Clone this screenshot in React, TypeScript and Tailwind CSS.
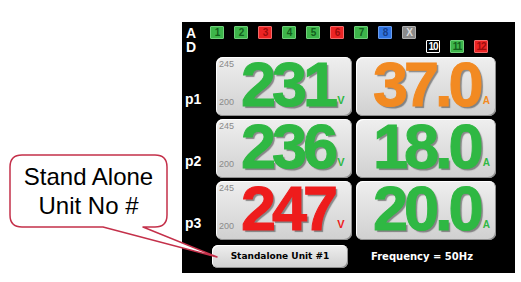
import React from 'react';

type Chan = { label: string; bg: string; fg: string; border: string };

const topChans: Chan[] = [
  { label: '1', bg: 'bg-[#3db54a]', fg: 'text-[#125e1c]', border: 'border-[#6fd07a]' },
  { label: '2', bg: 'bg-[#3db54a]', fg: 'text-[#125e1c]', border: 'border-[#6fd07a]' },
  { label: '3', bg: 'bg-[#ec2424]', fg: 'text-[#9c0c0c]', border: 'border-[#f26a6a]' },
  { label: '4', bg: 'bg-[#3db54a]', fg: 'text-[#125e1c]', border: 'border-[#6fd07a]' },
  { label: '5', bg: 'bg-[#3db54a]', fg: 'text-[#125e1c]', border: 'border-[#6fd07a]' },
  { label: '6', bg: 'bg-[#ec2424]', fg: 'text-[#9c0c0c]', border: 'border-[#f26a6a]' },
  { label: '7', bg: 'bg-[#3db54a]', fg: 'text-[#125e1c]', border: 'border-[#6fd07a]' },
  { label: '8', bg: 'bg-[#2f74e2]', fg: 'text-[#173f8c]', border: 'border-[#6c9ded]' },
  { label: 'X', bg: 'bg-[#8a8a8a]', fg: 'text-[#dcdcdc]', border: 'border-[#b0b0b0]' },
];

const bottomChans: Chan[] = [
  { label: '10', bg: 'bg-black', fg: 'text-white', border: 'border-white' },
  { label: '11', bg: 'bg-[#3db54a]', fg: 'text-[#125e1c]', border: 'border-[#6fd07a]' },
  { label: '12', bg: 'bg-[#ec2424]', fg: 'text-[#9c0c0c]', border: 'border-[#f26a6a]' },
];

const rows = [
  { phase: 'p1', volts: '231', vColor: 'text-[#2fb843]', amps: '37.0', aColor: 'text-[#f28a22]' },
  { phase: 'p2', volts: '236', vColor: 'text-[#2fb843]', amps: '18.0', aColor: 'text-[#2fb843]' },
  { phase: 'p3', volts: '247', vColor: 'text-[#ee1c1c]', amps: '20.0', aColor: 'text-[#2fb843]' },
];

const ChanBox = ({ c }: { c: Chan }) => (
  <div
    className={`w-[14px] h-[13px] flex items-center justify-center rounded-[1px] border text-[10px] font-bold leading-none tracking-[-1px] ${c.bg} ${c.fg} ${c.border}`}
  >
    {c.label}
  </div>
);

const cardCls =
  'h-[59px] rounded-[7px] bg-gradient-to-b from-[#efefef] to-[#d0d0d0] shadow-[inset_1px_1px_0_#ffffff,inset_-1px_-1px_0_#8f8f8f] flex';

const bigNum =
  "font-['Liberation_Sans',Arial,sans-serif] font-bold text-[63px] leading-[63px] tracking-[-4px] mt-[-4px] [-webkit-text-stroke:1px_currentColor] [text-shadow:2px_2px_1px_rgba(60,60,60,0.55)]";

export default function App() {
  return (
    <div className="relative w-[521px] h-[282px] bg-white overflow-hidden font-['Liberation_Sans',Arial,sans-serif]">
      <div className="pl-[182px] pt-[22px]">
        <div className="w-[333px] h-[251px] bg-black flex flex-col">
          {/* channel header */}
          <div className="pt-[4px] pl-[4px] flex flex-col gap-[1px]">
            <div className="flex items-center h-[13px]">
              <span className="w-[24px] text-white font-bold text-[14px] leading-[12px]">A</span>
              <div className="flex gap-[10px]">
                {topChans.map((c) => (
                  <ChanBox key={c.label} c={c} />
                ))}
              </div>
            </div>
            <div className="flex items-center h-[13px]">
              <span className="w-[24px] text-white font-bold text-[14px] leading-[12px]">D</span>
              <div className="flex gap-[10px] ml-[216px]">
                {bottomChans.map((c) => (
                  <ChanBox key={c.label} c={c} />
                ))}
              </div>
            </div>
          </div>

          {/* readings */}
          <div className="mt-[4px] grid grid-cols-[30px_136px_140px] gap-x-[4px] gap-y-[3px]">
            {rows.map((r) => (
              <React.Fragment key={r.phase}>
                <div className="flex items-end pl-[3px] pb-[10px] text-white font-bold text-[14px] leading-none">
                  {r.phase}
                </div>
                <div className={cardCls}>
                  <div className="w-[25px] pl-[3px] pt-[3px] pb-[9px] flex flex-col justify-between text-[9px] leading-none text-[#8a8a8a]">
                    <span>245</span>
                    <span>200</span>
                  </div>
                  <span className={`${bigNum} ${r.vColor}`}>{r.volts}</span>
                  <span className={`self-end mb-[10px] ml-[3px] text-[11px] font-bold leading-none ${r.vColor}`}>V</span>
                </div>
                <div className={`${cardCls} pl-[17px]`}>
                  <span className={`${bigNum} ${r.aColor}`}>{r.amps}</span>
                  <span className={`self-end mb-[10px] ml-[3px] text-[10px] font-bold leading-none ${r.aColor}`}>A</span>
                </div>
              </React.Fragment>
            ))}
          </div>

          {/* footer */}
          <div className="mt-[5px] pl-[30px] flex gap-[4px] items-center">
            <div className="w-[136px] h-[23px] rounded-[6px] bg-gradient-to-b from-[#efefef] to-[#d0d0d0] shadow-[inset_1px_1px_0_#ffffff,inset_-1px_-1px_0_#8f8f8f] flex items-center justify-center font-['DejaVu_Sans',Verdana,sans-serif] font-bold text-[9px] text-black">
              Standalone Unit #1
            </div>
            <div className="w-[140px] text-center font-['DejaVu_Sans',Verdana,sans-serif] font-bold text-[10px] text-white">
              Frequency = 50Hz
            </div>
          </div>
        </div>
      </div>

      {/* callout annotation */}
      <svg className="absolute inset-0 pointer-events-none" width="521" height="282" viewBox="0 0 521 282">
        <path
          d="M22 155 H155 Q167 155 167 167 V215 Q167 227 155 227 H143 L217 257 L103 227 H22 Q10 227 10 215 V167 Q10 155 22 155 Z"
          fill="#ffffff"
          stroke="#c4304a"
          strokeWidth="1.5"
          strokeLinejoin="round"
        />
      </svg>
      <div className="absolute left-[10px] top-[155px] w-[157px] h-[72px] flex flex-col items-center justify-center text-[24px] leading-[29px] text-black">
        <span>Stand Alone</span>
        <span>Unit No #</span>
      </div>
    </div>
  );
}
